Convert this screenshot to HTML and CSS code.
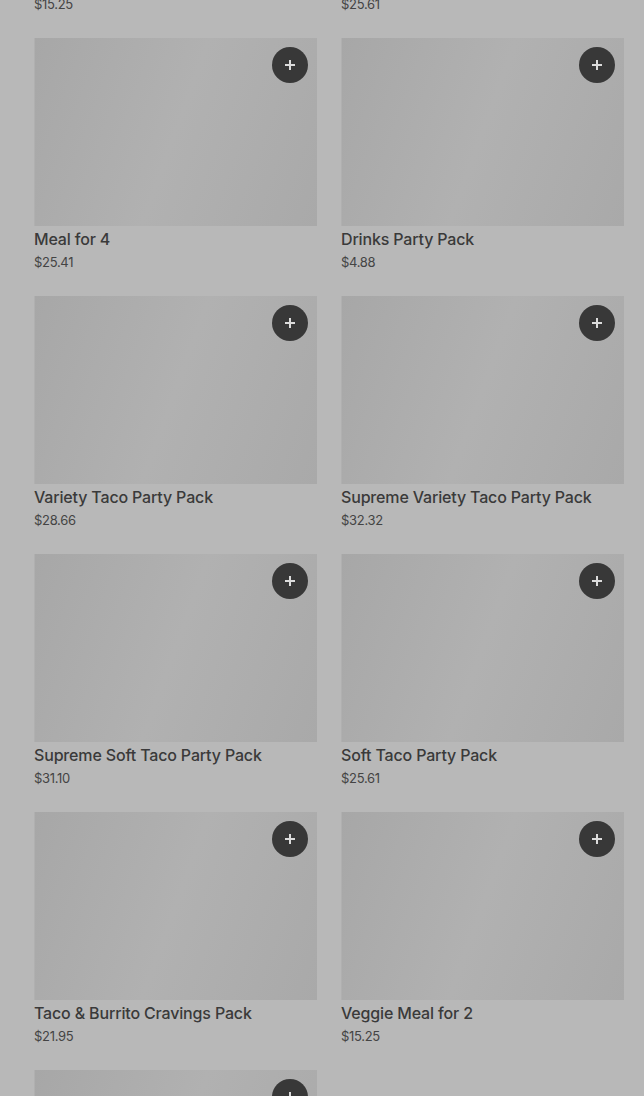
FILE: index.html
```html
<!DOCTYPE html>
<html>
<head>
<meta charset="utf-8">
<link rel="stylesheet" href="styles.css">
</head>
<body>
<div class="page">
  <div class="grid">
    <div class="card"><div class="img"><button class="add"><svg viewBox="0 0 12 12" width="12" height="12"><path d="M6 1v10M1 6h10" stroke="#dcdcdc" stroke-width="2"/></svg></button></div><div class="title">Veggie Cravings Pack</div><div class="price">$15.25</div></div>
    <div class="card"><div class="img"><button class="add"><svg viewBox="0 0 12 12" width="12" height="12"><path d="M6 1v10M1 6h10" stroke="#dcdcdc" stroke-width="2"/></svg></button></div><div class="title">Taco Party Pack</div><div class="price">$25.61</div></div>
    <div class="card"><div class="img"><button class="add"><svg viewBox="0 0 12 12" width="12" height="12"><path d="M6 1v10M1 6h10" stroke="#dcdcdc" stroke-width="2"/></svg></button></div><div class="title">Meal for 4</div><div class="price">$25.41</div></div>
    <div class="card"><div class="img"><button class="add"><svg viewBox="0 0 12 12" width="12" height="12"><path d="M6 1v10M1 6h10" stroke="#dcdcdc" stroke-width="2"/></svg></button></div><div class="title">Drinks Party Pack</div><div class="price">$4.88</div></div>
    <div class="card"><div class="img"><button class="add"><svg viewBox="0 0 12 12" width="12" height="12"><path d="M6 1v10M1 6h10" stroke="#dcdcdc" stroke-width="2"/></svg></button></div><div class="title">Variety Taco Party Pack</div><div class="price">$28.66</div></div>
    <div class="card"><div class="img"><button class="add"><svg viewBox="0 0 12 12" width="12" height="12"><path d="M6 1v10M1 6h10" stroke="#dcdcdc" stroke-width="2"/></svg></button></div><div class="title">Supreme Variety Taco Party Pack</div><div class="price">$32.32</div></div>
    <div class="card"><div class="img"><button class="add"><svg viewBox="0 0 12 12" width="12" height="12"><path d="M6 1v10M1 6h10" stroke="#dcdcdc" stroke-width="2"/></svg></button></div><div class="title">Supreme Soft Taco Party Pack</div><div class="price">$31.10</div></div>
    <div class="card"><div class="img"><button class="add"><svg viewBox="0 0 12 12" width="12" height="12"><path d="M6 1v10M1 6h10" stroke="#dcdcdc" stroke-width="2"/></svg></button></div><div class="title">Soft Taco Party Pack</div><div class="price">$25.61</div></div>
    <div class="card"><div class="img"><button class="add"><svg viewBox="0 0 12 12" width="12" height="12"><path d="M6 1v10M1 6h10" stroke="#dcdcdc" stroke-width="2"/></svg></button></div><div class="title">Taco &amp; Burrito Cravings Pack</div><div class="price">$21.95</div></div>
    <div class="card"><div class="img"><button class="add"><svg viewBox="0 0 12 12" width="12" height="12"><path d="M6 1v10M1 6h10" stroke="#dcdcdc" stroke-width="2"/></svg></button></div><div class="title">Veggie Meal for 2</div><div class="price">$15.25</div></div>
    <div class="card"><div class="img"><button class="add"><svg viewBox="0 0 12 12" width="12" height="12"><path d="M6 1v10M1 6h10" stroke="#dcdcdc" stroke-width="2"/></svg></button></div><div class="title">Chalupa Cravings Pack</div><div class="price">$18.40</div></div>
  </div>
</div>
</body>
</html>
```
FILE: styles.css
```css
html, body {
  margin: 0;
  padding: 0;
  background: #b8b8b8;
  height: 100%;
  overflow: hidden;
}
.page {
  padding: 0 20px 0 34px;
  font-family: Inter, "Liberation Sans", sans-serif;
}
.grid {
  margin-top: -220px;
  display: grid;
  grid-template-columns: 283px 283px;
  column-gap: 24px;
  row-gap: 24px;
}
.card {
  display: flex;
  flex-direction: column;
}
.img {
  position: relative;
  height: 188px;
  background: linear-gradient(110deg, #a7a7a7 0%, #acacac 25%, #b1b1b1 50%, #adadad 75%, #a9a9a9 100%);
  box-shadow: inset 1px 0 0 #b0b0b0;
}
.add {
  position: absolute;
  top: 9px;
  right: 9px;
  width: 36px;
  height: 36px;
  border-radius: 50%;
  border: none;
  padding: 0;
  background: #383838;
  display: flex;
  align-items: center;
  justify-content: center;
}
.add svg {
  display: block;
}
.title {
  font-size: 16px;
  line-height: 24px;
  height: 24px;
  margin-top: 1px;
  color: #3a3a3a;
  font-weight: 500;
  letter-spacing: -0.16px;
  white-space: nowrap;
}
.price {
  font-size: 13px;
  line-height: 20px;
  margin-top: 1px;
  color: #444;
  letter-spacing: -0.3px;
}
```
